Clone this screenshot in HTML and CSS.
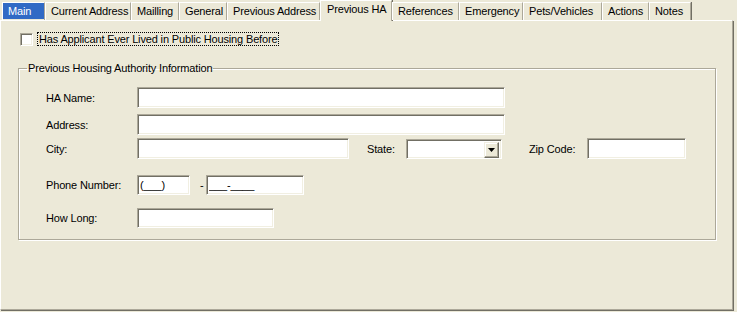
FILE: index.html
```html
<!DOCTYPE html>
<html lang="en">
<head>
    <meta charset="UTF-8">
    <title>Applicant - Previous HA</title>
    <link rel="stylesheet" href="styles.css">
</head>
<body>
    <div class="tabs">
        <div class="tab focus"><span class="tab-label">Main</span></div>
        <div class="tab">Current Address</div>
        <div class="tab">Mailling</div>
        <div class="tab">General</div>
        <div class="tab">Previous Address</div>
        <div class="tab active">Previous HA</div>
        <div class="tab">References</div>
        <div class="tab">Emergency</div>
        <div class="tab">Pets/Vehicles</div>
        <div class="tab">Actions</div>
        <div class="tab">Notes</div>
    </div>
    <div class="panel">
        <label class="check-row">
            <span class="checkbox"></span>
            <span class="check-label">Has Applicant Ever Lived in Public Housing Before</span>
        </label>
        <fieldset class="group">
            <legend>Previous Housing Authority Information</legend>
            <div class="row row-name">
                <span class="label">HA Name:</span>
                <input class="field w-long" type="text">
            </div>
            <div class="row row-address">
                <span class="label">Address:</span>
                <input class="field w-long" type="text">
            </div>
            <div class="row row-city">
                <span class="label">City:</span>
                <input class="field w-city" type="text">
                <span class="label-state">State:</span>
                <div class="select">
                    <span class="select-btn">
                        <svg width="7" height="4" viewBox="0 0 7 4"><path d="M0 0h7L3.5 4z" fill="#000"/></svg>
                    </span>
                </div>
                <span class="label-zip">Zip Code:</span>
                <input class="field w-zip" type="text">
            </div>
            <div class="row row-phone">
                <span class="label">Phone Number:</span>
                <input class="field w-area" type="text" value="(___)">
                <span class="dash">-</span>
                <input class="field w-phone" type="text" value="___-____">
            </div>
            <div class="row row-long">
                <span class="label">How Long:</span>
                <input class="field w-long-short" type="text">
            </div>
        </fieldset>
    </div>
</body>
</html>
```

FILE: styles.css
```css
body {
    margin: 0;
    background-color: #ece9d8;
    font-family: Tahoma, 'Liberation Sans', Arial, sans-serif;
    font-size: 11px;
    letter-spacing: -0.15px;
    color: #000;
    width: 737px;
    height: 312px;
    overflow: hidden;
}

/* onglets */
.tabs {
    display: flex;
    align-items: flex-end;
    height: 20px;
    padding-left: 2px;
    position: relative;
    z-index: 1;
}
.tab {
    box-sizing: border-box;
    height: 18px;
    border-top: 1px solid #fff;
    border-left: 1px solid #fff;
    border-right: 1px solid #aca899;
    box-shadow: 1px 0 0 #716f64;
    line-height: 17px;
    padding-left: 5px;
    white-space: nowrap;
    overflow: hidden;
}
.tab:nth-child(1) { width: 43px; padding: 0; }
.tab:nth-child(2) { width: 86px; }
.tab:nth-child(3) { width: 48px; }
.tab:nth-child(4) { width: 48px; }
.tab:nth-child(5) { width: 93px; }
.tab:nth-child(6) { width: 72px; }
.tab:nth-child(7) { width: 67px; }
.tab:nth-child(8) { width: 64px; }
.tab:nth-child(9) { width: 79px; }
.tab:nth-child(10) { width: 47px; }
.tab:nth-child(11) { width: 42px; }

.tab.focus .tab-label {
    display: block;
    height: 16px;
    background-color: #316ac5;
    color: #fff;
    padding-left: 5px;
    line-height: 16px;
}
.tab.active {
    height: 21px;
    margin-bottom: -1px;
    background-color: #ece9d8;
    line-height: 17px;
    padding-left: 6px;
}

/* panneau */
.panel {
    box-sizing: border-box;
    width: 733px;
    height: 290px;
    border-top: 1px solid #fff;
    border-left: 1px solid #fff;
    border-right: 1px solid #aca899;
    border-bottom: 1px solid #aca899;
    box-shadow: 1px 1px 0 #716f64;
    padding-top: 11px;
}

.check-row {
    display: flex;
    align-items: center;
    margin-left: 19px;
    height: 14px;
}
.checkbox {
    box-sizing: border-box;
    width: 13px;
    height: 13px;
    background-color: #fff;
    border: 1px solid;
    border-color: #aca899 #fff #fff #aca899;
    box-shadow: inset 1px 1px 0 #716f64, inset -1px -1px 0 #f1efe2;
}
.check-label {
    margin-left: 4px;
    border: 1px dotted #000;
    padding: 0 1px;
    line-height: 12px;
}

/* cadre */
.group {
    box-sizing: border-box;
    width: 698px;
    margin: 15px 0 0 17px;
    padding: 12px 0 11px 27px;
    border: 1px solid #aca899;
    box-shadow: 1px 1px 0 #fff, inset 1px 1px 0 #fff;
}
.group legend {
    padding: 0 1px;
    margin-left: -19px;
    line-height: 14px;
}

.row {
    display: flex;
    align-items: center;
}
.row-address { margin-top: 6px; }
.row-city { margin-top: 3px; }
.row-phone { margin-top: 16px; }
.row-long { margin-top: 13px; }

.label {
    width: 91px;
    flex: none;
}

.field {
    box-sizing: border-box;
    height: 21px;
    margin: 0;
    padding: 0 2px;
    background-color: #fff;
    border: 1px solid;
    border-color: #aca899 #fff #fff #aca899;
    box-shadow: inset 1px 1px 0 #716f64, inset -1px -1px 0 #f1efe2;
    font-family: inherit;
    font-size: 11px;
    letter-spacing: inherit;
    color: #000;
    outline: none;
}
.row-phone .field,
.row-long .field { height: 20px; }

.w-long { width: 368px; }
.w-city { width: 212px; }
.w-zip { width: 99px; }
.w-area { width: 53px; }
.w-phone { width: 98px; }
.w-long-short { width: 137px; }

.label-state {
    margin-left: 18px;
    width: 39px;
}
.select {
    box-sizing: border-box;
    width: 96px;
    height: 20px;
    background-color: #fff;
    border: 1px solid;
    border-color: #aca899 #fff #fff #aca899;
    box-shadow: inset 1px 1px 0 #716f64, inset -1px -1px 0 #f1efe2;
    display: flex;
    justify-content: flex-end;
    padding: 2px;
}
.select-btn {
    box-sizing: border-box;
    width: 15px;
    height: 16px;
    background-color: #ece9d8;
    border: 1px solid;
    border-color: #f1efe2 #716f64 #716f64 #f1efe2;
    box-shadow: inset -1px -1px 0 #aca899, inset 1px 1px 0 #fff;
    display: flex;
    align-items: center;
    justify-content: center;
}
.label-zip {
    margin-left: 27px;
    width: 58px;
}
.dash {
    margin-left: 10px;
    width: 6px;
}
```
